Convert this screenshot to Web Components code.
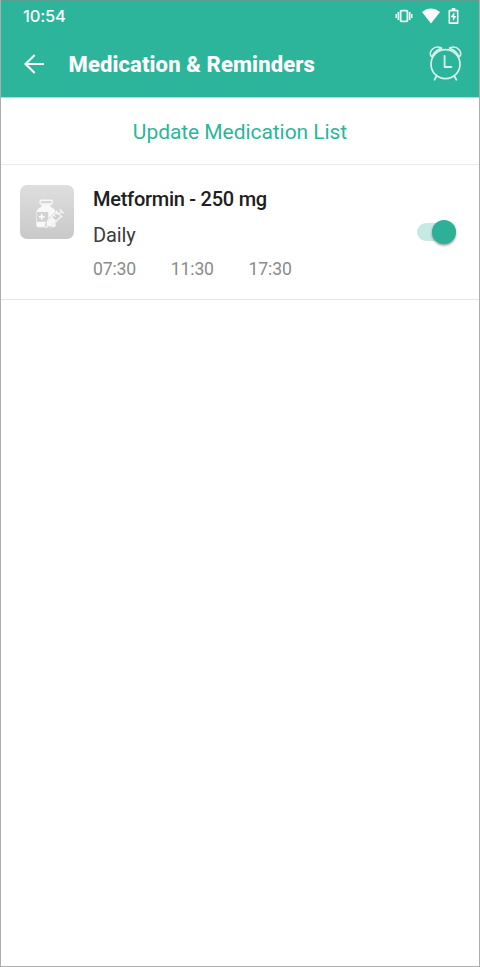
<!DOCTYPE html>
<html lang="en">
<head>
<meta charset="utf-8">
<title>Medication &amp; Reminders</title>
<style>
html,body{margin:0;height:100%;background:#fff}
body{font-family:Roboto,"Liberation Sans",sans-serif}
</style>
</head>
<body>
<medication-app></medication-app>
<script>
const define = (name, markup) => {
  const template = document.createElement('template');
  template.innerHTML = markup;
  customElements.define(name, class extends HTMLElement {
    constructor() {
      super();
      this.attachShadow({mode: 'open'}).append(template.content.cloneNode(true));
    }
  });
};

define('status-bar', `
<style>
:host{display:flex;height:29px;align-items:center;justify-content:space-between;padding:0 20px 0 22px;color:#fff;box-sizing:border-box}
time{font:500 16.5px/20px Inter,Roboto,sans-serif;letter-spacing:-.15px}
.icons{display:flex;align-items:center;gap:8.5px;margin-right:1px}
svg{display:block}
.icons{margin-right:0}
</style>
<time>10:54</time>
<div class="icons">
<svg width="18" height="14" viewBox="0 0 18 14" fill="none" stroke="#e6f7f3"><rect x="5.6" y="1.6" width="6.8" height="10.8" rx=".8" stroke-width="1.9"/><path d="M3.3 3v8M14.7 3v8" stroke-width="1.7"/><path d="M1.2 5v4M16.8 5v4" stroke-width="1.5"/></svg>
<svg width="18" height="16" viewBox="0 0 18 16" fill="#fff"><path d="M0 4Q9-2.8 18 4L9 15.5Z"/></svg>
<svg width="11" height="16" viewBox="0 0 10 16" fill="none"><path d="M3.2 0h3.6v1.7H9Q10 1.7 10 2.7V15Q10 16 9 16H1Q0 16 0 15V2.7Q0 1.7 1 1.7h2.2Z" fill="#eefaf7"/><path d="M1.6 3.4h6.8v10.8H1.6Z" fill="#2cb59a"/><path d="M5.8 4 2.2 9.3h2.2v4L7.8 8H5.8Z" fill="#fff"/></svg>
</div>`);

define('app-header', `
<style>
:host{display:flex;height:67px;align-items:center;padding:0 16px 0 23px;color:#fff}
svg{display:block}
h1{flex:1;margin:2px 0 0 24.5px;font-size:22px;line-height:28px;font-weight:800;letter-spacing:.12px;white-space:nowrap}
.alarm{margin-bottom:1px}
</style>
<svg width="20" height="20" viewBox="0 0 20 20" fill="none" stroke="#fff" stroke-width="2.1"><path d="M20 10H2M10.7 1 1.5 10l9.2 9"/></svg>
<h1><slot></slot></h1>
<svg class="alarm" width="34" height="36" viewBox="0 0 34 36" fill="none" stroke="#d6f2eb" stroke-width="1.6" stroke-linecap="round" stroke-linejoin="round"><circle cx="16.5" cy="19.2" r="14.5" stroke-width="1.7"/><path d="M15.6 11v11h6.8M7.3 31.5 5.6 34.7M25.6 31.5 27.3 34.7" stroke-width="1.8"/><path d="M2.2 11.4C-.6 7.2 4.2 0 12 2.7Q13.3 3.3 10.7 3.9 5.7 6 3.3 11Q2.9 12 2.2 11.4ZM30.8 11.4C33.6 7.2 28.8 0 21 2.7Q19.7 3.3 22.3 3.9 27.3 6 29.7 11Q30.1 12 30.8 11.4Z"/></svg>`);

define('update-link', `
<style>
:host{display:flex;height:67px;align-items:center;justify-content:center;box-sizing:content-box;border-bottom:1px solid #e9e9e9;color:#2cb59a;font-size:21px;line-height:26px}
span{padding-top:2px;white-space:nowrap;letter-spacing:-.06px}
</style><span><slot></slot></span>`);

define('medicine-icon', `
<style>
:host{display:block;width:54px;height:54px;border-radius:7px;background:linear-gradient(#dedede,#c9c9c9)}
svg{display:block}
</style>
<svg width="54" height="54" viewBox="0 0 54 54" fill="none">
<rect x="20.2" y="15.2" width="12" height="3.8" rx="1" stroke="#f7f7f7" stroke-width="1.4"/>
<path d="M21.5 19.5v2.2q-5.2 2-5.2 6V40q0 2.2 2.2 2.2h15q2.2 0 2.2-2.2V27.7q0-4-5.2-6v-2.2Z" fill="#f8f8f8"/>
<path d="M16.8 27h11.4v9.8H16.8Z" fill="#d2d2d2"/>
<path d="M21.7 29v5.4M19 31.7h5.4" stroke="#fff" stroke-width="1.5"/>
<path d="M25.3 41.8 27 36l9.7-9.7 5.2 5.2-10.4 9.7Z" fill="#d0d0d0" stroke="#d0d0d0" stroke-width="1.4"/>
<path d="m27.5 36.2 9.3-9.3 4.4 4.4-9.3 9.3h-4.4ZM35.8 25.8l6.4 6.4M39 29.1l2.7-2.7M39.6 24.3l4 4M27.4 40.7l-2 2" stroke="#f7f7f7" stroke-width="1.3"/>
<path d="m28 36.4 4.5-4.5 3.5 3.5-4.5 4.7h-3.5Z" fill="#f7f7f7"/>
<path d="m34 30 1.8 1.8M36 28l1.8 1.8" stroke="#fff"/>
</svg>`);

define('toggle-switch', `
<style>
:host{display:flex;align-items:center;width:39px;height:26px}
.track{display:flex;align-items:center;justify-content:flex-end;width:39px;height:18px;border-radius:9px;background:#c6eae3}
.thumb{width:24px;height:24px;flex:none;border-radius:50%;background:#2cb098;box-shadow:0 1.5px 2.5px #0006}
</style>
<div class="track"><div class="thumb"></div></div>`);

define('medication-row', `
<style>
:host{display:flex;height:134px;border-bottom:1px solid #e5e5e5;padding:0 23px 0 18.5px;box-sizing:content-box}
medicine-icon{margin-top:20.4px;flex:none}
.details{flex:1;padding:20px 0 0 19.5px;white-space:nowrap}
.name{font-size:20px;line-height:28px;font-weight:500;color:#202020;letter-spacing:-.26px}
.freq{font-size:20px;line-height:28px;margin-top:8px;color:#3c3c3c;letter-spacing:-.15px}
.times{display:flex;font-size:17.6px;line-height:24px;margin-top:8px;color:#8b8b8b;letter-spacing:-.15px}
::slotted([slot=time]){width:77.8px}
toggle-switch{margin-top:54px}
</style>
<medicine-icon></medicine-icon>
<div class="details">
<div class="name"><slot name="name"></slot></div>
<div class="freq"><slot name="frequency"></slot></div>
<div class="times"><slot name="time"></slot></div>
</div>
<toggle-switch></toggle-switch>`);

define('medication-app', `
<style>
:host{display:block;box-sizing:border-box;height:967px;border:1px solid #adadad;border-top:0;background:#fff}
.top{background:#2cb59a;border-top:1px solid #5a9f8f;height:97px;box-sizing:border-box}
update-link{box-shadow:inset 0 1px #a5dfd3}
</style>
<div class="top"><status-bar></status-bar><app-header>Medication &amp; Reminders</app-header></div>
<update-link>Update Medication List</update-link>
<medication-row>
<span slot="name">Metformin - 250 mg</span><span slot="frequency">Daily</span>
<span slot="time">07:30</span><span slot="time">11:30</span><span slot="time">17:30</span>
</medication-row>`);
</script>
</body>
</html>
